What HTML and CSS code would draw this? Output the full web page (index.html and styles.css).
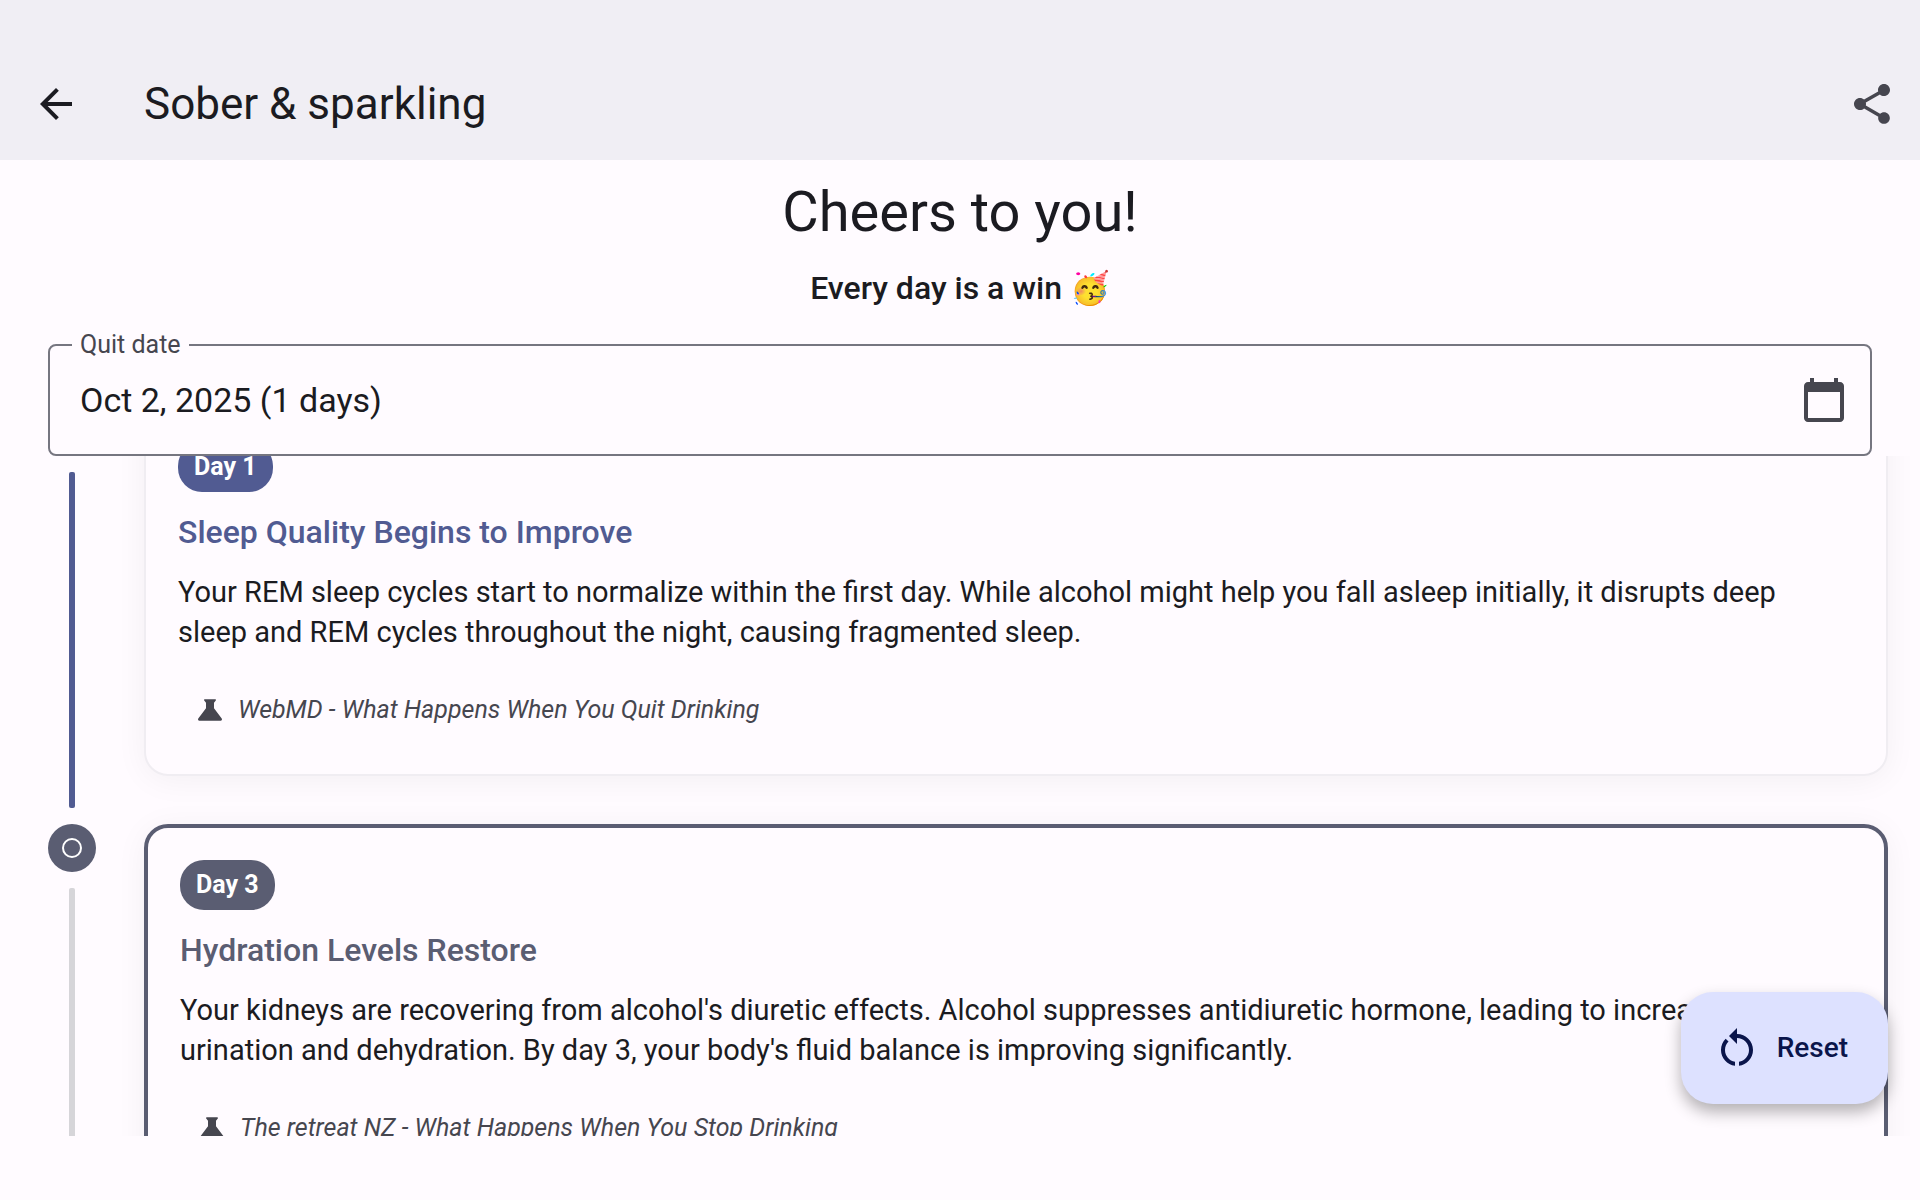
FILE: index.html
```html
<!DOCTYPE html>
<html lang="en">
<head>
<meta charset="utf-8">
<meta name="viewport" content="width=device-width, initial-scale=1">
<title>Sober &amp; sparkling</title>
<link rel="stylesheet" href="styles.css">
</head>
<body>
<div class="app">
  <header class="app-bar">
    <button class="icon-button" type="button" aria-label="Back">
      <svg class="icon" viewBox="0 0 24 24"><path d="M20 11H7.83l5.59-5.59L12 4l-8 8 8 8 1.41-1.41L7.83 13H20v-2z"/></svg>
    </button>
    <h1 class="app-title">Sober &amp; sparkling</h1>
    <button class="icon-button icon-button-muted" type="button" aria-label="Share">
      <svg class="icon" viewBox="0 0 24 24"><path d="M18 16.08c-.76 0-1.44.3-1.96.77L8.91 12.7c.05-.23.09-.46.09-.7s-.04-.47-.09-.7l7.05-4.11c.54.5 1.25.81 2.04.81 1.66 0 3-1.34 3-3s-1.34-3-3-3-3 1.34-3 3c0 .24.04.47.09.7L8.04 9.81C7.5 9.31 6.79 9 6 9c-1.66 0-3 1.34-3 3s1.34 3 3 3c.79 0 1.5-.31 2.04-.81l7.12 4.16c-.05.21-.08.43-.08.65 0 1.61 1.31 2.92 2.92 2.92s2.92-1.31 2.92-2.92-1.31-2.92-2.92-2.92z"/></svg>
    </button>
  </header>

  <section class="intro">
    <h2 class="headline">Cheers to you!</h2>
    <p class="subhead">Every day is a win <span class="emoji">🥳</span></p>
    <fieldset class="date-field">
      <legend class="date-legend"><label for="quit-date">Quit date</label></legend>
      <div class="date-row">
        <input class="date-input" id="quit-date" type="text" value="Oct 2, 2025 (1 days)" readonly>
        <button class="icon-button icon-button-muted" type="button" aria-label="Pick a date">
          <svg class="icon" viewBox="0 0 24 24"><path d="M20 3h-1V1h-2v2H7V1H5v2H4c-1.1 0-2 .9-2 2v16c0 1.1.9 2 2 2h16c1.1 0 2-.9 2-2V5c0-1.1-.9-2-2-2zm0 18H4V8h16v13z"/></svg>
        </button>
      </div>
    </fieldset>
  </section>

  <main class="timeline">
    <ol class="milestones">
      <li class="milestone milestone-done">
        <div class="track">
          <span class="dot"></span>
          <span class="bar"></span>
        </div>
        <article class="card">
          <span class="day">Day 1</span>
          <h3 class="card-title">Sleep Quality Begins to Improve</h3>
          <p class="card-text">Your REM sleep cycles start to normalize within the first day. While alcohol might help you fall asleep initially, it disrupts deep sleep and REM cycles throughout the night, causing fragmented sleep.</p>
          <a class="source" href="#webmd">
            <svg class="source-icon" viewBox="0 0 24 24"><path d="M20.8 18.4L15 10.67V6.5l1.35-1.69c.26-.33.03-.81-.39-.81H8.04c-.42 0-.65.48-.39.81L9 6.5v4.17L3.2 18.4c-.49.66-.02 1.6.8 1.6h16c.82 0 1.29-.94.8-1.6z"/></svg>
            <span>WebMD - What Happens When You Quit Drinking</span>
          </a>
        </article>
      </li>
      <li class="milestone milestone-next">
        <div class="track">
          <span class="dot"><span class="ring"></span></span>
          <span class="bar"></span>
        </div>
        <article class="card">
          <span class="day">Day 3</span>
          <h3 class="card-title">Hydration Levels Restore</h3>
          <p class="card-text">Your kidneys are recovering from alcohol's diuretic effects. Alcohol suppresses antidiuretic hormone, leading to increased urination and dehydration. By day 3, your body's fluid balance is improving significantly.</p>
          <a class="source" href="#retreat">
            <svg class="source-icon" viewBox="0 0 24 24"><path d="M20.8 18.4L15 10.67V6.5l1.35-1.69c.26-.33.03-.81-.39-.81H8.04c-.42 0-.65.48-.39.81L9 6.5v4.17L3.2 18.4c-.49.66-.02 1.6.8 1.6h16c.82 0 1.29-.94.8-1.6z"/></svg>
            <span>The retreat NZ - What Happens When You Stop Drinking</span>
          </a>
        </article>
      </li>
    </ol>
    <button class="fab" type="button">
      <svg class="icon" viewBox="0 0 24 24"><path d="M12 5V2L8 6l4 4V7c3.31 0 6 2.69 6 6 0 2.97-2.17 5.43-5 5.91v2.02c3.95-.49 7-3.85 7-7.93 0-4.42-3.58-8-8-8zm-6 8c0-1.65.67-3.15 1.76-4.24L6.34 7.34C4.9 8.79 4 10.79 4 13c0 4.08 3.05 7.44 7 7.93v-2.02c-2.83-.48-5-2.94-5-5.91z"/></svg>
      <span>Reset</span>
    </button>
  </main>
</div>
</body>
</html>
```
FILE: styles.css
```css
:root {
  --surface: #fffbff;
  --surface-bar: #f0eef4;
  --ink: #1b1b21;
  --ink-muted: #46464f;
  --outline: #767680;
  --primary: #515b92;
  --secondary: #5a5d72;
  --idle: #d6d5d9;
}

* {
  box-sizing: border-box;
}

body {
  margin: 0;
  background: var(--surface);
  color: var(--ink);
  font-family: Roboto, "Noto Sans", sans-serif;
  font-size: 29px;
}

h1, h2, h3, p, ol, fieldset {
  margin: 0;
  padding: 0;
  font-weight: 400;
}

button {
  border: 0;
  background: none;
  font: inherit;
  cursor: pointer;
}

.app {
  display: flex;
  flex-direction: column;
  height: 100vh;
  padding-bottom: 64px;
}

.icon {
  display: block;
  width: 48px;
  height: 48px;
  fill: currentColor;
}

.icon-button {
  flex: none;
  padding: 0;
  color: var(--ink);
}

.icon-button-muted {
  color: var(--ink-muted);
}

.app-bar {
  display: flex;
  flex: none;
  align-items: center;
  gap: 64px;
  padding: 72px 24px 24px 32px;
  background: var(--surface-bar);
}

.app-title {
  flex: 1;
  font-size: 44px;
  line-height: 64px;
}

.intro {
  display: flex;
  flex: none;
  flex-direction: column;
  gap: 16px;
  padding: 16px 48px 0;
  text-align: center;
}

.headline {
  font-size: 56px;
  line-height: 72px;
}

.subhead {
  font-size: 32px;
  font-weight: 500;
  line-height: 48px;
}

.emoji {
  font-family: "Noto Color Emoji", sans-serif;
}

.date-field {
  min-width: 0;
  height: 128px;
  padding: 0 22px;
  border: 2px solid var(--outline);
  border-radius: 8px;
  text-align: left;
}

.date-legend {
  padding: 0 8px;
  color: var(--ink-muted);
  font-size: 25px;
  line-height: 34px;
}

.date-row {
  display: flex;
  align-items: center;
  padding: 14px 0 0 8px;
}

.date-input {
  flex: 1;
  min-width: 0;
  padding: 0;
  border: 0;
  outline: 0;
  background: none;
  color: var(--ink);
  font: inherit;
  font-size: 34px;
  line-height: 48px;
}

.timeline {
  position: relative;
  flex: 1;
  min-height: 0;
  overflow: hidden;
}

.milestones {
  display: flex;
  flex-direction: column;
  gap: 16px;
  margin-top: -48px;
  padding: 0 32px 0 48px;
  list-style: none;
}

.milestone {
  display: flex;
  gap: 48px;
}

.milestone-done {
  --accent: var(--primary);
  --track: var(--primary);
}

.milestone-next {
  --accent: var(--secondary);
  --track: var(--idle);
}

.track {
  display: flex;
  flex: none;
  flex-direction: column;
  align-items: center;
  gap: 16px;
  width: 48px;
}

.dot {
  display: grid;
  flex: none;
  place-items: center;
  width: 48px;
  height: 48px;
  border-radius: 50%;
  background: var(--accent);
}

.ring {
  width: 20px;
  height: 20px;
  border: 2px solid #fff;
  border-radius: 50%;
}

.bar {
  flex: 1;
  width: 6px;
  border-radius: 2px;
  background: var(--track);
}

.card {
  display: flex;
  flex: 1;
  flex-direction: column;
  align-items: flex-start;
  min-width: 0;
  margin-bottom: 32px;
  padding: 32px;
  border: 2px solid #f0edf2;
  border-radius: 24px;
  background: var(--surface);
  box-shadow: 0 4px 32px rgba(0, 0, 0, 0.05);
}

.milestone-next .card {
  border: 4px solid var(--secondary);
}

.day {
  padding: 9px 16px;
  border-radius: 24px;
  background: var(--accent);
  color: #fff;
  font-size: 25px;
  font-weight: 700;
  line-height: 32px;
}

.card-title {
  margin-top: 16px;
  color: var(--accent);
  font-size: 32px;
  font-weight: 500;
  line-height: 48px;
}

.card-text {
  margin-top: 16px;
  padding-right: 32px;
  line-height: 40px;
}

.source {
  display: flex;
  align-items: center;
  gap: 12px;
  min-height: 64px;
  margin-top: 26px;
  padding: 0 16px;
  color: var(--ink-muted);
  font-size: 25px;
  font-style: italic;
  line-height: 32px;
  text-decoration: none;
}

.source-icon {
  width: 32px;
  height: 32px;
  fill: currentColor;
}

.fab {
  position: absolute;
  right: 32px;
  bottom: 32px;
  display: flex;
  align-items: center;
  gap: 16px;
  padding: 32px 40px 32px 32px;
  border-radius: 32px;
  background: #dde1ff;
  box-shadow: 0 8px 16px rgba(0, 0, 0, 0.3);
  color: #0a154b;
  font-size: 28px;
  font-weight: 500;
  line-height: 40px;
}
```
